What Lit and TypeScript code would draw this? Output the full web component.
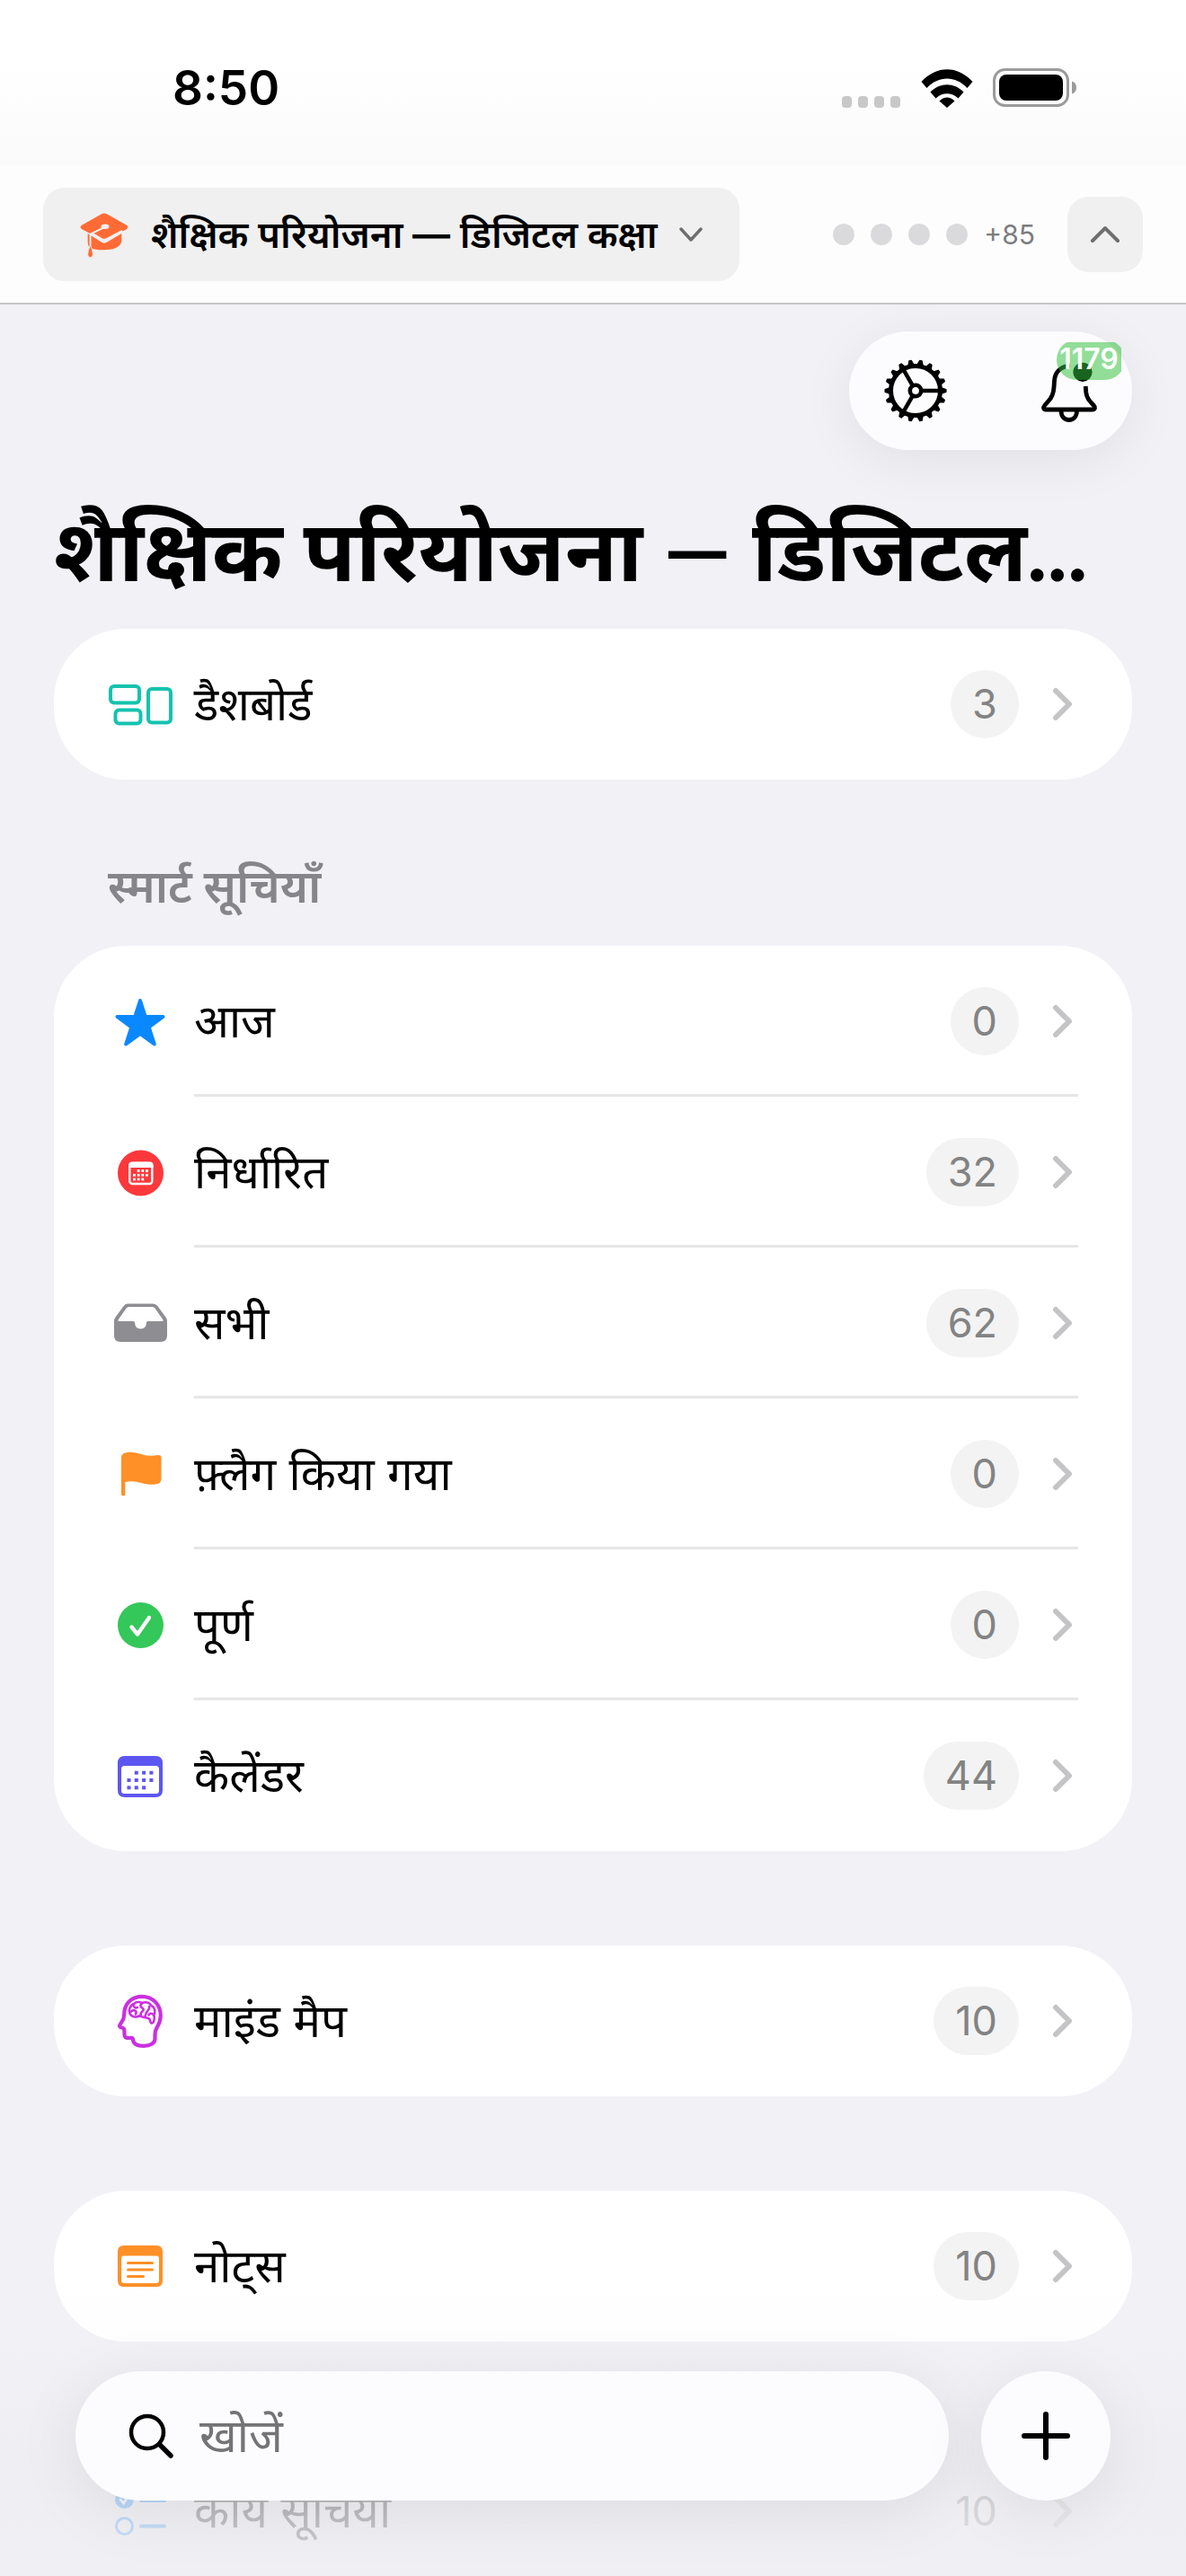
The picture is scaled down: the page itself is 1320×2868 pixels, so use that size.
import { LitElement, html, svg, css, type SVGTemplateResult } from "lit";
import { customElement, property } from "lit/decorators.js";

interface Entry {
  icon: string;
  label: string;
  count: number;
}

const dashboard: Entry[] = [{ icon: "dashboard", label: "डैशबोर्ड", count: 3 }];
const smartLists: Entry[] = [
  { icon: "star", label: "आज", count: 0 },
  { icon: "scheduled", label: "निर्धारित", count: 32 },
  { icon: "tray", label: "सभी", count: 62 },
  { icon: "flag", label: "फ़्लैग किया गया", count: 0 },
  { icon: "done", label: "पूर्ण", count: 0 },
  { icon: "calendar", label: "कैलेंडर", count: 44 },
];
const mindMaps: Entry[] = [{ icon: "mind", label: "माइंड मैप", count: 10 }];
const notes: Entry[] = [{ icon: "notes", label: "नोट्स", count: 10 }];
const taskLists: Entry[] = [{ icon: "checklist", label: "कार्य सूचियाँ", count: 10 }];

const dotGrid = (x: number, y: number, step: number, size: number) =>
  [[1, 0], [2, 0], [3, 0], [0, 1], [1, 1], [2, 1], [3, 1], [0, 2], [1, 2], [2, 2]].map(
    ([c, r]) => svg`<rect x=${x + c * step} y=${y + r * step} width=${size} height=${size} />`
  );

// Row icons share a 72 × 72 grid.
const icons: Record<string, SVGTemplateResult> = {
  dashboard: svg`<g fill="none" stroke="#14c3ae" stroke-width="4">
    <rect x="3" y="16" width="32" height="18.5" rx="4" />
    <rect x="8.5" y="42.5" width="28" height="15" rx="4" />
    <rect x="45" y="19" width="25" height="37.5" rx="4" /></g>`,
  star: svg`<path fill="#0a88ff" stroke="#0a88ff" stroke-width="4" stroke-linejoin="round"
    d="M36 13 L41.8 31 L61.5 31 L45.7 42.7 L51.8 61.5 L36 50 L20.2 61.5 L26.3 42.7 L10.5 31 L30.2 31 Z" />`,
  scheduled: svg`<circle cx="36.5" cy="37" r="25.5" fill="#fc383b" />
    <rect x="24.3" y="26" width="25" height="23" rx="3" fill="none" stroke="#fff" stroke-width="2.4" />
    <path d="M23.2 31 V28 a3.5 3.5 0 0 1 3.5 -3.5 H47 a3.5 3.5 0 0 1 3.5 3.5 V31 Z" fill="#fff" />
    <g fill="#fff">${dotGrid(28, 33.2, 4.7, 2.8)}</g>`,
  tray: svg`<path fill="#8e8e92" fill-rule="evenodd"
    d="M22 14.5 H50 Q53.5 14.5 55.5 17.3 L64.5 29.5 Q66 31.5 66 34 V50 Q66 57 59 57 H14 Q7 57 7 50 V34 Q7 31.5 8.5 29.5 L17.5 17.3 Q19 14.5 22 14.5 Z
    M23.5 18 Q21.5 18 20.5 19.5 L11.5 32.5 Q11 34 12.5 34 H28.5 Q30 34 30 35.5 Q30.5 42.5 36.5 42.5 Q42.5 42.5 43 35.5 Q43 34 44.5 34 H60.5 Q62 34 61.5 32.5 L52.5 19.5 Q51.5 18 49.5 18 Z" />`,
  flag: svg`<path fill="#ff8f27" d="M15 17 Q15.5 12 24 11.7 C34 11.3 40 17 52 15.5 Q59.5 14 59.5 17.5 V42 Q59.5 47.5 51 47.8 C39 48.5 32 42 19.3 45 V58.5 Q19.3 60.5 17.2 60.5 Q15 60.5 15 58.5 Z" />`,
  done: svg`<circle cx="36.5" cy="36.5" r="25.5" fill="#34c759" />
    <path d="M26.5 38.5 L33 46.5 L46 28" fill="none" stroke="#fff" stroke-width="4.4" stroke-linecap="round" stroke-linejoin="round" />`,
  calendar: svg`<path fill="#5e56f0" fill-rule="evenodd"
    d="M19 14 H53 Q61 14 61 22 V52 Q61 60 53 60 H19 Q11 60 11 52 V22 Q11 14 19 14 Z M18.5 25 Q15 25 15 28.5 V52.5 Q15 56 18.5 56 H53.5 Q57 56 57 52.5 V28.5 Q57 25 53.5 25 Z" />
    <g fill="#5e56f0">${dotGrid(21.5, 30.7, 8.3, 4)}</g>`,
  mind: svg`<g fill="none" stroke="#cb30e0" stroke-width="4.2" stroke-linejoin="round" stroke-linecap="round">
    <path d="M38 8.8 C50 8.8 58.8 18 58.8 30 C58.8 37 56.5 40 54.5 43.5 C53 46 52.5 48 52.5 52 V56 C52.5 61 47 63.8 40 63.8 C33 63.8 28.5 61.5 28 57 C28 54.5 26.5 54.7 23 55 C20 55.300 18.500 54 18.500 51 L18.300 46 C18 44 17 43.700 15.500 43.500 C12.500 43 12.500 41.500 14 39.500 L17 34.500 C18.500 31 18 29 18.500 25 C20 15 28 8.800 38 8.800 Z" />
    <path stroke-width="2.6" d="M29 17 C24 19 23 25 24.5 28 C27 32 33 32.5 35.5 30 C39 33 43 31.5 46 33.5 C47.5 35 47 38.5 49 38.5 C51 38.5 52.5 34 51.5 29.5 C53.5 25 52 20.5 48.5 19 C46 15.5 42 14.5 38 16 C35 14.3 31 14.8 29 17 Z" />
    <path stroke-width="2.6" d="M28.5 17.5 C28.5 21 30.5 22 33 21 M26 25.5 C29 22.5 33 25 31 28.5 M38 16.5 C34.5 19.5 38 21.5 39.5 22.5 C41 25 36 25 36.5 30 M46 20 C47.5 24 42 24.5 41.5 31 M51 29.5 C49 26.5 46 28 45.5 29.5" />
    </g>`,
  notes: svg`<path fill="#ff8f27" fill-rule="evenodd"
    d="M18 13 H54 Q61 13 61 20 V52 Q61 59 54 59 H18 Q11 59 11 52 V20 Q11 13 18 13 Z M18 24.5 Q15 24.5 15 27.5 V52 Q15 55 18 55 H54 Q57 55 57 52 V27.5 Q57 24.5 54 24.5 Z" />
    <path d="M22.5 32.5 H49.5 M22.5 40 H49.5 M22.5 47.5 H39.5" stroke="#ff8f27" stroke-width="3" stroke-linecap="round" />`,
  checklist: svg`<circle cx="18.5" cy="22.5" r="10.5" fill="#0a84ff" />
    <path d="M14 23 L17.5 27 L23 18.5" fill="none" stroke="#fff" stroke-width="2.6" stroke-linecap="round" />
    <circle cx="18.5" cy="52.5" r="9" fill="none" stroke="#0a84ff" stroke-width="3" />
    <path d="M37 24 H63 M37 52.5 H63" stroke="#0a84ff" stroke-width="4" stroke-linecap="round" />`,
};

const teeth = Array.from({ length: 18 }, (_, i) => i * 20);
const spokes = [0, 120, 240];

@customElement("list-card")
export class ListCard extends LitElement {
  @property({ attribute: false }) entries: Entry[] = [];

  static styles = css`
    :host { display: block; }
    ul {
      margin: 0;
      padding: 0;
      list-style: none;
      background: #fff;
      border-radius: 80px;
    }
    :host([plain]) ul, :host([plain]) .count { background: none; }
    a {
      display: flex;
      gap: 24px;
      align-items: center;
      padding: 0 60px;
      color: #000;
      text-decoration: none;
    }
    .icon { flex: none; width: 72px; height: 72px; }
    .body {
      flex: 1;
      min-width: 0;
      box-sizing: border-box;
      display: flex;
      gap: 36px;
      align-items: center;
      min-height: 168px;
      padding-right: 6px;
    }
    li:not(:last-child) .body { box-shadow: inset 0 -3px #e6e6e6; }
    .label { flex: 1; font-size: 51px; line-height: 72px; }
    .count {
      box-sizing: border-box;
      min-width: 76px;
      padding: 0 24px;
      border-radius: 38px;
      background: #f3f3f3;
      color: #838383;
      font-size: 45px;
      line-height: 76px;
      text-align: center;
    }
    .chevron { flex: none; width: 24px; height: 40px; }
  `;

  render() {
    return html`<ul>
      ${this.entries.map(
        (e) => html`<li>
          <a href="#${e.icon}">
            <svg class="icon" viewBox="0 0 72 72" aria-hidden="true">${icons[e.icon]}</svg>
            <span class="body">
              <span class="label">${e.label}</span>
              <span class="count">${e.count}</span>
              <svg class="chevron" viewBox="0 0 24 40" aria-hidden="true">
                <path d="M5 5 L20 20 L5 35" fill="none" stroke="#c4c4c6" stroke-width="6" stroke-linecap="round" stroke-linejoin="round" />
              </svg>
            </span>
          </a>
        </li>`
      )}
    </ul>`;
  }
}

@customElement("app-root")
export class AppRoot extends LitElement {
  static styles = css`
    :host {
      position: relative;
      display: flex;
      flex-direction: column;
      height: 100vh;
      overflow: hidden;
      background: #f1f1f6;
      color: #000;
      font-family: Inter, "Noto Sans", "Noto Sans Devanagari", sans-serif;
    }
    button { border: 0; padding: 0; margin: 0; background: none; font: inherit; color: inherit; }
    svg { display: block; flex: none; }

    .status {
      display: flex;
      justify-content: space-between;
      align-items: center;
      box-sizing: border-box;
      height: 184px;
      padding: 12px 120px 0 192px;
      background: linear-gradient(#fff 40%, #fafafa);
    }
    .time { font-size: 53px; line-height: 64px; font-weight: 600; }
    .signals { display: flex; align-items: center; gap: 22px; }

    .tabs {
      display: flex;
      align-items: center;
      box-sizing: border-box;
      height: 155px;
      padding: 0 48px;
      background: #fdfdfd;
      border-bottom: 2px solid #c4c4c8;
    }
    .project {
      display: flex;
      align-items: center;
      height: 104px;
      padding: 0 40px;
      border-radius: 24px;
      background: #f0f0f0;
    }
    .project-name { margin: 0 24px; font-size: 42px; line-height: 60px; font-weight: 600; white-space: nowrap; }
    .pages { display: flex; align-items: center; gap: 18px; margin-left: auto; }
    .page { width: 24px; height: 24px; border-radius: 50%; background: #dadadc; }
    .more { color: #7c7c7e; font-size: 30px; line-height: 36px; }
    .collapse {
      display: grid;
      place-items: center;
      width: 84px;
      height: 84px;
      margin-left: 36px;
      border-radius: 24px;
      background: #f0f0f0;
    }

    main { flex: 1; min-height: 0; overflow-y: auto; scrollbar-width: none; padding: 30px 60px 0; }
    .toolbar {
      display: flex;
      justify-content: space-between;
      align-items: center;
      box-sizing: border-box;
      width: 315px;
      height: 132px;
      margin-left: auto;
      padding: 0 34px;
      border-radius: 66px;
      background: #fcfcfe;
      box-shadow: 0 12px 60px rgba(0, 0, 0, 0.07);
    }
    .bell { position: relative; }
    .badge {
      position: absolute;
      top: -21px;
      left: 22px;
      box-sizing: border-box;
      width: 76px;
      height: 45px;
      padding-right: 4px;
      border-radius: 23px;
      clip-path: inset(3px 4px 0 0);
      background: rgba(48, 192, 58, 0.52);
      color: #fff;
      font-size: 32px;
      line-height: 44px;
      font-weight: 600;
      text-align: center;
    }
    h1 {
      margin: 43px 0 24px;
      font-family: Lato, "Noto Sans Devanagari", "Noto Sans", sans-serif;
      font-size: 95px;
      line-height: 132px;
      font-weight: 700;
      white-space: nowrap;
    }
    h2 { margin: 83px 60px 30px; color: #85858b; font-size: 51px; line-height: 72px; font-weight: 600; }
    .spaced { margin-top: 105px; }

    .fade {
      position: absolute;
      inset: auto 0 0;
      height: 330px;
      pointer-events: none;
      background: linear-gradient(rgba(240, 240, 244, 0), rgba(240, 240, 244, 0.12) 22%, rgba(238, 238, 241, 0.7) 65%, rgba(240, 240, 244, 0.9));
    }
    .dock {
      position: absolute;
      inset: auto 84px 84px;
      display: flex;
      gap: 36px;
    }
    .search {
      flex: 1;
      min-width: 0;
      display: flex;
      align-items: center;
      gap: 28px;
      height: 144px;
      padding: 0 58px;
      border-radius: 72px;
      background: #fcfcfe;
      box-shadow: 0 12px 72px rgba(0, 0, 0, 0.08);
      box-sizing: border-box;
    }
    .search input {
      flex: 1;
      min-width: 0;
      border: 0;
      padding: 0;
      outline: 0;
      background: none;
      font: inherit;
      font-size: 51px;
      line-height: 72px;
      height: 72px;
    }
    .search input::placeholder { color: #747476; opacity: 1; }
    .add {
      flex: none;
      display: grid;
      place-items: center;
      width: 144px;
      height: 144px;
      border-radius: 50%;
      background: #fcfcfe;
      box-shadow: 0 12px 72px rgba(0, 0, 0, 0.08);
    }
  `;

  render() {
    return html`
      <div class="status">
        <span class="time">8:50</span>
        <div class="signals" aria-hidden="true">
          <svg width="66" height="44" viewBox="0 0 66 44" fill="#c8c8c8">
            ${[0, 18, 36, 54].map((x) => svg`<rect x=${x} y="31" width="11" height="13" rx="4" />`)}
          </svg>
          <svg width="58" height="44" viewBox="0 0 58 44">
            <path d="M0.5 15 C17 -3.5 41 -3.5 57.5 15 L51.5 22 C38.5 8 19.5 8 6.5 22 Z" />
            <path d="M10.5 26.5 C21 15.5 37 15.5 47.5 26.5 L41.5 33.5 C34.5 26.5 23.5 26.5 16.5 33.5 Z" />
            <path d="M20.5 36.5 C25.5 31 32.5 31 37.5 36.5 L29 44 Z" />
          </svg>
          <svg width="95" height="44" viewBox="0 0 95 44">
            <rect x="1.5" y="1.5" width="82" height="40" rx="12" fill="none" stroke="#9b9b9b" stroke-width="3" />
            <rect x="7" y="7" width="71" height="29" rx="8" />
            <path d="M88 14.5 Q93 16 93 21.5 Q93 27 88 28.5 Z" fill="#9b9b9b" />
          </svg>
        </div>
      </div>

      <header class="tabs">
        <button class="project" type="button">
          <svg width="56" height="54" viewBox="0 0 58 54" aria-hidden="true">
            <path d="M10 26 V36 Q10 43 18 44 Q29 46 40 43.5 Q48.5 41 49 34 V26 L31 36.5 Q29 37.5 27 36.5 Z" fill="#ff6b35" />
            <path d="M26 3.5 Q29 2 32 3.5 L54.5 16 Q58.5 18.5 54.5 21 L32 33 Q29 34.5 26 33 L3.5 21 Q-0.5 18.5 3.5 16 Z" fill="#ff6b35" />
            <path d="M30 18.5 L13 26.5 V40" fill="none" stroke="#f0f0f0" stroke-width="2" stroke-linejoin="round" />
            <path d="M15 26 L26 32.5 Q29 34 32 32.5 L50 23" fill="none" stroke="#f0f0f0" stroke-width="2.5" />
            <ellipse cx="30" cy="18" rx="4.6" ry="2.8" fill="#f0f0f0" />
            <path d="M13 39 Q10 46 10 50 Q10 53.5 13 53.5 Q16 53.5 16 50 Q16 46 13 39 Z" fill="#ff6b35" stroke="#f0f0f0" stroke-width="1" />
          </svg>
          <span class="project-name">शैक्षिक परियोजना — डिजिटल कक्षा</span>
          <svg width="28" height="20" viewBox="0 0 28 20" aria-hidden="true">
            <path d="M3 4 L14 16 L25 4" fill="none" stroke="#6e6e70" stroke-width="3.5" stroke-linecap="round" stroke-linejoin="round" />
          </svg>
        </button>
        <div class="pages">
          ${[0, 1, 2, 3].map(() => html`<span class="page"></span>`)}
          <span class="more">+85</span>
        </div>
        <button class="collapse" type="button" aria-label="समेटें">
          <svg width="34" height="24" viewBox="0 0 34 24" aria-hidden="true">
            <path d="M3 19 L17 5 L31 19" fill="none" stroke="#6e6e70" stroke-width="4" stroke-linecap="round" stroke-linejoin="round" />
          </svg>
        </button>
      </header>

      <main>
        <div class="toolbar">
          <button type="button" aria-label="सेटिंग्स">
            <svg width="80" height="80" viewBox="-40 -40 80 80" stroke="#000" fill="none" aria-hidden="true">
              <circle r="27.5" stroke-width="5" />
              ${teeth.map((a) => svg`<path d="M28 -3.3 L33.8 -1.2 V1.2 L28 3.3 Z" fill="#000" stroke-width="1.5" stroke-linejoin="round" transform="rotate(${a})" />`)}
              ${spokes.map((a) => svg`<path d="M7 0 H26" stroke-width="4.5" transform="rotate(${a})" />`)}
              <circle r="6.2" stroke-width="4.6" />
            </svg>
          </button>
          <button class="bell" type="button" aria-label="सूचनाएँ">
            <svg width="72" height="72" viewBox="0 0 72 72" fill="none" stroke="#000" stroke-width="4.8" stroke-linecap="round" stroke-linejoin="round" aria-hidden="true">
              <path d="M37 8.5 C26 8.5 20 16 19.5 25 C19 35 18.5 40 15 45 L9 52 C6.5 55 7.5 57 10 57 H61.5 C65 57 65.5 54.5 63 52 C58 46.5 55.5 44 54.8 38 L54.2 31" stroke-linecap="butt" />
              <path d="M27 58 C27 65 31 68.5 35.8 68.5 C40.5 68.5 44.5 65 44.5 58" />
              <circle cx="51" cy="15.3" r="10.6" fill="#000" stroke="none" />
            </svg>
            <span class="badge">1179</span>
          </button>
        </div>

        <h1>शैक्षिक परियोजना — डिजिटल...</h1>
        <list-card .entries=${dashboard}></list-card>
        <h2>स्मार्ट सूचियाँ</h2>
        <list-card .entries=${smartLists}></list-card>
        <list-card class="spaced" .entries=${mindMaps}></list-card>
        <list-card class="spaced" .entries=${notes}></list-card>
        <list-card class="spaced" plain .entries=${taskLists}></list-card>
      </main>

      <div class="fade"></div>
      <div class="dock">
        <label class="search">
          <svg width="52" height="52" viewBox="0 0 52 52" fill="none" stroke="#000" stroke-width="4.5" stroke-linecap="round" aria-hidden="true">
            <circle cx="22" cy="22" r="18" />
            <path d="M35.5 35.5 L48 48" stroke-width="5.5" />
          </svg>
          <input type="search" placeholder="खोजें" aria-label="खोजें" />
        </label>
        <button class="add" type="button" aria-label="जोड़ें">
          <svg width="56" height="56" viewBox="0 0 56 56" aria-hidden="true">
            <path d="M28 4 V52 M4 28 H52" stroke="#000" stroke-width="6" stroke-linecap="round" />
          </svg>
        </button>
      </div>
    `;
  }
}
